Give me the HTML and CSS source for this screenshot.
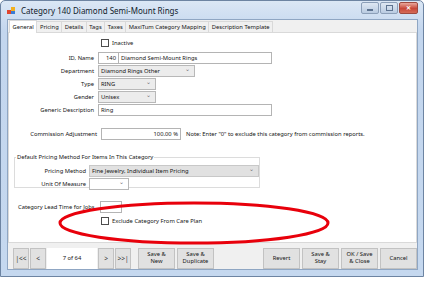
FILE: index.html
```html
<!DOCTYPE html>
<html>
<head>
    <title>Category 140 Diamond Semi-Mount Rings</title>
    <link rel="stylesheet" href="styles.css">
</head>
<body>
    <div class="window">
        <div class="titlebar">
            <svg class="app-icon" width="9" height="9" viewBox="0 0 9 9">
                <rect x="0" y="4" width="4" height="4" fill="#e0452f"/>
                <rect x="4" y="1" width="4" height="4" fill="#f2b01e"/>
                <rect x="4" y="5" width="4" height="3" fill="#3a7bd5"/>
            </svg>
            <span class="title">Category 140 Diamond Semi-Mount Rings</span>
            <div class="caption-buttons">
                <div class="cap-btn"><span class="min-glyph"></span></div>
                <div class="cap-btn"><span class="max-glyph"></span></div>
                <div class="cap-btn close">&#x2715;</div>
            </div>
        </div>

        <div class="client">
            <div class="tabs">
                <div class="tab selected">General</div>
                <div class="tab">Pricing</div>
                <div class="tab">Details</div>
                <div class="tab">Tags</div>
                <div class="tab">Taxes</div>
                <div class="tab">MaxiTum Category Mapping</div>
                <div class="tab">Description Template</div>
            </div>

            <div class="panel">
                <div class="check-row first">
                    <span class="checkbox"></span><span>Inactive</span>
                </div>

                <div class="row">
                    <label>ID, Name</label>
                    <div class="field id-field">140</div>
                    <div class="field name-field">Diamond Semi-Mount Rings</div>
                </div>
                <div class="row">
                    <label>Department</label>
                    <div class="combo dept">Diamond Rings Other<span class="arrow">&#x2304;</span></div>
                </div>
                <div class="row">
                    <label>Type</label>
                    <div class="combo short">RING<span class="arrow">&#x2304;</span></div>
                </div>
                <div class="row">
                    <label>Gender</label>
                    <div class="combo short">Unisex<span class="arrow">&#x2304;</span></div>
                </div>
                <div class="row">
                    <label>Generic Description</label>
                    <div class="field generic">Ring</div>
                </div>

                <div class="row commission">
                    <label>Commission Adjustment</label>
                    <div class="field percent">100.00 %</div>
                    <span class="note">Note: Enter "0" to exclude this category from commission reports.</span>
                </div>

                <fieldset class="group">
                    <legend>Default Pricing Method For Items In This Category</legend>
                    <div class="row">
                        <label>Pricing Method</label>
                        <div class="combo pricing">Fine Jewelry, Individual Item Pricing<span class="arrow">&#x2304;</span></div>
                    </div>
                    <div class="row">
                        <label>Unit Of Measure</label>
                        <div class="combo unit"><span class="arrow">&#x2304;</span></div>
                    </div>
                </fieldset>

                <div class="row lead">
                    <label>Category Lead Time for Jobs</label>
                    <div class="field lead-field"></div>
                </div>
                <div class="check-row exclude">
                    <span class="checkbox"></span><span>Exclude Category From Care Plan</span>
                </div>

                <svg class="highlight" width="280" height="48" viewBox="0 0 280 48">
                    <ellipse cx="138" cy="22" rx="134" ry="20" fill="none" stroke="#e8000b" stroke-width="3"/>
                </svg>
            </div>

            <div class="bottom-bar">
                <div class="nav">
                    <div class="btn nav-btn">|&lt;&lt;</div>
                    <div class="btn nav-btn">&lt;</div>
                    <div class="position">7 of 64</div>
                    <div class="btn nav-btn">&gt;</div>
                    <div class="btn nav-btn">&gt;&gt;|</div>
                </div>
                <div class="btn action">Save &amp;<br>New</div>
                <div class="btn action">Save &amp;<br>Duplicate</div>
                <div class="spacer"></div>
                <div class="btn action">Revert</div>
                <div class="btn action">Save &amp;<br>Stay</div>
                <div class="btn action">OK / Save<br>&amp; Close</div>
                <div class="btn action">Cancel</div>
            </div>
        </div>
    </div>
</body>
</html>
```

FILE: styles.css
```css
/* Window frame */
body {
    margin: 0;
    background: #ffffff;
    font-family: "Noto Sans", "Open Sans", sans-serif;
    font-size: 5.8px;
    color: #141414;
}

.window {
    width: 422px;
    height: 275px;
    border: 1px solid #6d84a2;
    border-radius: 5px 5px 0 0;
    background: linear-gradient(#dbe7f5, #c3d6ee 30px, #c5d8ef);
    display: flex;
    flex-direction: column;
}

.titlebar {
    height: 18px;
    display: flex;
    align-items: center;
    padding-left: 6px;
}

.app-icon {
    margin-right: 5px;
}

.title {
    font-size: 8px;
    color: #101c2c;
}

.caption-buttons {
    margin-left: auto;
    margin-right: 5px;
    margin-top: -4px;
    display: flex;
    gap: 1px;
}

.cap-btn {
    width: 16px;
    height: 10px;
    border: 1px solid #8c9fb8;
    border-radius: 2px;
    background: linear-gradient(#dfe8f3, #b9cbe1);
    display: flex;
    align-items: center;
    justify-content: center;
}

.min-glyph {
    width: 6px;
    height: 2px;
    background: #5d7390;
    margin-top: 3px;
}

.max-glyph {
    width: 5px;
    height: 4px;
    border: 1px solid #5d7390;
}

.cap-btn.close {
    width: 17px;
    border-color: #9e4a40;
    background: linear-gradient(#e9a89c, #c8483a 55%, #d56b57);
    color: #ffffff;
    font-size: 6px;
    font-weight: bold;
}

/* Client area */
.client {
    flex: 1;
    margin: 0 5px 6px 6px;
    background: #f0f0f0;
    display: flex;
    flex-direction: column;
    border: 1px solid #8fa6c3;
}

.tabs {
    display: flex;
    align-items: flex-end;
    height: 12px;
    padding-left: 1px;
}

.tab {
    height: 10px;
    line-height: 10px;
    padding: 0 2.5px;
    border: 1px solid #d9d9d9;
    border-bottom: none;
    background: #f0f0f0;
    margin-right: -1px;
    white-space: nowrap;
}

.tab.selected {
    height: 12px;
    line-height: 12px;
    background: #ffffff;
    position: relative;
    z-index: 1;
    margin-bottom: -1px;
}

.panel {
    position: relative;
    height: 209px;
    background: #ffffff;
    border: 1px solid #d9d9d9;
}

/* Form rows */
.row {
    display: flex;
    align-items: center;
    height: 12px;
    margin-top: 1px;
    white-space: nowrap;
}

.row label {
    width: 85px;
    text-align: right;
    padding-right: 4px;
    flex-shrink: 0;
}

.field, .combo {
    height: 10px;
    line-height: 10px;
    border: 1px solid #b4b4b4;
    background: #ffffff;
    padding: 0 2px;
    box-sizing: content-box;
    white-space: nowrap;
}

.id-field {
    width: 15px;
    text-align: right;
}

.name-field {
    width: 148px;
    border-left: none;
}

.combo {
    position: relative;
    background: #ececec;
    border-color: #b8b8b8;
}

.combo .arrow {
    position: absolute;
    right: 4px;
    top: -2px;
    font-size: 6px;
    color: #707070;
}

.dept {
    width: 91px;
}

.short {
    width: 52px;
}

.generic {
    width: 168px;
}

.commission {
    margin-top: 12px;
}

.commission label {
    width: 88px;
}

.percent {
    width: 74px;
    text-align: right;
}

.note {
    margin-left: 5px;
}

.check-row {
    display: flex;
    align-items: center;
    gap: 3px;
    padding-left: 92px;
    height: 10px;
}

.check-row.first {
    margin-top: 5px;
    margin-bottom: 4px;
}

.checkbox {
    width: 6px;
    height: 6px;
    border: 1px solid #4d4d4d;
    background: #ffffff;
}

/* Group box */
.group {
    margin: 13px 0 0 5px;
    width: 240px;
    height: 30px;
    padding: 3px 0 0 0;
    border: 1px solid #dcdcdc;
}

.group legend {
    padding: 0 1px;
    margin-left: 1px;
}

.group .row label {
    width: 71px;
    padding-right: 3px;
}

.pricing {
    width: 164px;
    background: #e1e1e1;
    border-color: #c8c8c8;
}

.unit {
    width: 34px;
    background: #ffffff;
}

.lead {
    margin-top: 13px;
}

.lead label {
    width: 82px;
    text-align: left;
    padding-left: 9px;
    padding-right: 0;
}

.lead-field {
    width: 16px;
}

.exclude {
    margin-top: 3px;
}

/* Red highlight drawn over the form */
.highlight {
    position: absolute;
    left: 47px;
    top: 168px;
}

/* Bottom button bar */
.bottom-bar {
    flex: 1;
    display: flex;
    align-items: center;
    gap: 2px;
    padding: 4px 0 0 5px;
}

.nav {
    display: flex;
    gap: 1px;
    margin-right: 5px;
}

.btn {
    height: 21px;
    border: 1px solid #c2c2c2;
    background: #e1e1e1;
    display: flex;
    align-items: center;
    justify-content: center;
    text-align: center;
    line-height: 7px;
    box-sizing: border-box;
}

.nav-btn {
    width: 16px;
    font-size: 6.5px;
    color: #333333;
}

.position {
    width: 50px;
    height: 21px;
    background: #ffffff;
    display: flex;
    align-items: center;
    justify-content: center;
}

.action {
    width: 37px;
}

.spacer {
    flex: 1;
}
```
